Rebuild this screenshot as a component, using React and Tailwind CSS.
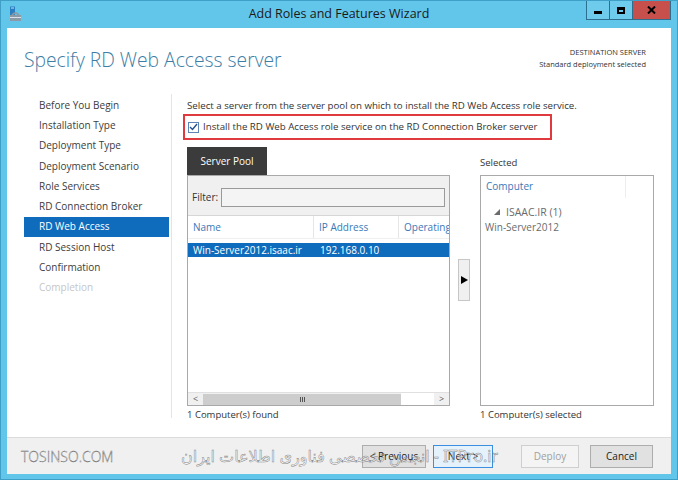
import React from "react";

const FONT = { fontFamily: '"Open Sans", "Noto Sans", sans-serif' };

const navItems = [
	"Before You Begin",
	"Installation Type",
	"Deployment Type",
	"Deployment Scenario",
	"Role Services",
	"RD Connection Broker",
	"RD Web Access",
	"RD Session Host",
	"Confirmation",
	"Completion",
];

function TitleBar() {
	return (
		<div className="relative h-[27px] flex items-center justify-center shrink-0">
			{/* app icon */}
			<svg className="absolute left-[8px] top-[5px]" width="14" height="16" viewBox="0 0 14 16">
				<rect x="1" y="0.5" width="5" height="9" fill="#2a7fc0" />
				<rect x="2" y="1.5" width="3" height="1" fill="#bfe4f7" />
				<path d="M1 9 h11 v6 h-11 z" fill="#8a9aa6" />
				<path d="M3 9 q3.5 -4 7 0" stroke="#8a9aa6" strokeWidth="1.5" fill="none" />
				<rect x="1" y="11" width="11" height="1" fill="#d8e2e8" />
			</svg>
			<span className="text-[12.5px] text-[#1a1a1a]" style={FONT}>
				Add Roles and Features Wizard
			</span>
			<div className="absolute right-[6px] top-0 flex h-[19px]">
				<div className="w-[24px] h-full border border-[#2d6f8e] border-t-0 bg-[#6fcbec] flex items-end justify-center pb-[5px]">
					<div className="w-[8px] h-[3px] bg-black" />
				</div>
				<div className="w-[23px] h-full border-b border-r border-[#2d6f8e] bg-[#6fcbec] flex items-center justify-center">
					<div className="w-[8px] h-[7px] border-2 border-black border-t-[3px]" />
				</div>
				<div className="w-[38px] h-full border-b border-r border-[#2d6f8e] bg-[#c7504c] flex items-center justify-center">
					<svg width="9" height="8" viewBox="0 0 9 8">
						<path d="M1 0.5 L8 7.5 M8 0.5 L1 7.5" stroke="#000" strokeWidth="2" />
					</svg>
				</div>
			</div>
		</div>
	);
}

function Nav() {
	return (
		<div className="w-[165px] shrink-0 pl-[17px] pt-[1px] mb-[19px] border-r border-[#e4e4e4]">
			{navItems.map((item) => (
				<div
					key={item}
					className={
						"h-[20.3px] pl-[15px] flex items-center text-[10px] " +
						(item === "RD Web Access"
							? "bg-[#0f6cbd] text-white mr-[2px]"
							: item === "Completion"
							? "text-[#c6c6c6]"
							: "text-[#3c3c3c]")
					}
				>
					{item}
				</div>
			))}
		</div>
	);
}

function ServerPool() {
	return (
		<div className="w-[263px] shrink-0 flex flex-col">
			<div className="w-[80px] h-[28px] bg-[#3b3b3b] text-white text-[10px] flex items-center justify-center">
				Server Pool
			</div>
			<div className="h-[231px] border border-[#a9a9a9] flex flex-col">
				<div className="h-[40px] bg-[#f0f0f0] border-b border-[#d6d6d6] flex items-center pl-[4px] pr-[4px] gap-[3px]">
					<span className="text-[10px] text-[#333] mt-[3px]">Filter:</span>
					<div className="flex-1 h-[19px] border border-[#9a9a9a] bg-[#f4f4f4] mt-[4px]" />
				</div>
				<div className="h-[23px] flex text-[10px] text-[#3a78b7] border-b border-[#f0f0f0]">
					<div className="w-[126px] pl-[5px] flex items-center border-r border-[#e6e6e6]">Name</div>
					<div className="w-[85px] pl-[5px] flex items-center border-r border-[#e6e6e6]">IP Address</div>
					<div className="flex-1 pl-[5px] flex items-center overflow-hidden whitespace-nowrap">Operating</div>
				</div>
				<div className="flex-1 pt-[4px]">
					<div className="h-[14px] bg-[#0f6cbd] text-white text-[10px] flex items-center">
						<div className="w-[127px] pl-[5px]">Win-Server2012.isaac.ir</div>
						<div className="pl-[5px]">192.168.0.10</div>
					</div>
				</div>
				<div className="h-[13px] flex items-center bg-[#f0f0f0] border-t border-[#e0e0e0]">
					<div className="w-[15px] h-full flex items-center justify-center text-[9px] text-[#606060]">&lt;</div>
					<div className="w-[198px] h-[11px] bg-[#cdcdcd] flex items-center justify-center">
						<div className="flex gap-[1px]">
							<div className="w-[1px] h-[5px] bg-[#555]" />
							<div className="w-[1px] h-[5px] bg-[#555]" />
							<div className="w-[1px] h-[5px] bg-[#555]" />
						</div>
					</div>
					<div className="flex-1 h-full bg-white" />
					<div className="w-[15px] h-full flex items-center justify-center text-[9px] text-[#606060]">&gt;</div>
				</div>
			</div>
			<div className="text-[9.5px] text-[#333] mt-[2px] leading-[14px]">1 Computer(s) found</div>
		</div>
	);
}

function SelectedPanel() {
	return (
		<div className="w-[174px] shrink-0 flex flex-col">
			<div className="h-[28px] flex items-end pb-[5px] text-[9.5px] text-[#333]">Selected</div>
			<div className="h-[231px] border border-[#a9a9a9] relative">
				<div className="absolute left-[144px] top-0 h-[22px] w-px bg-[#eeeeee]" />
				<div className="pl-[5px] pt-[3px] text-[10px] leading-[14px] text-[#3a78b7]">Computer</div>
				<div className="pl-[13px] pt-[12px] flex items-center gap-[6px] text-[10.5px] leading-[14px] text-[#6b6b6b]">
					<svg width="6" height="6" viewBox="0 0 6 6">
						<path d="M6 0 L6 6 L0 6 Z" fill="#6b6b6b" />
					</svg>
					ISAAC.IR (1)
				</div>
				<div className="pl-[4px] text-[10px] text-[#6b6b6b] leading-[16px]">Win-Server2012</div>
			</div>
			<div className="text-[9.5px] text-[#333] mt-[2px] leading-[14px]">1 Computer(s) selected</div>
		</div>
	);
}

function Footer() {
	return (
		<div className="relative h-[37px] mx-[6px] bg-[#f0f0f0] border-t border-[#dcdcdc] flex items-center shrink-0">
			<span
				className="ml-[14px] text-[14px] font-light text-white"
				style={{ ...FONT, WebkitTextStroke: "0.35px #555" }}
			>
				TOSINSO.COM
			</span>
			<div className="ml-auto mr-[18px] flex items-center gap-[7px] text-[10px]">
				<button className="w-[64px] h-[23px] border border-[#adadad] bg-[#e1e1e1] text-[#222]">
					&lt; Previous
				</button>
				<button className="w-[60px] h-[23px] border border-[#3c8ee0] bg-[#e5f1fb] text-[#222] mr-[21px]">
					Next &gt;
				</button>
				<button className="w-[58px] h-[23px] border border-[#cfcfcf] bg-[#f4f4f4] text-[#a0a0a0] mr-[4px]">
					Deploy
				</button>
				<button className="w-[63px] h-[23px] border border-[#adadad] bg-[#e1e1e1] text-[#222]">
					Cancel
				</button>
			</div>
			{/* watermark over the buttons */}
			<div
				dir="rtl"
				className="absolute left-[174px] top-[6px] text-[16px] text-[#ffffff]/50 whitespace-nowrap pointer-events-none"
				style={{ fontFamily: '"Noto Sans", "DejaVu Sans", sans-serif', WebkitTextStroke: "0.5px rgba(90,90,90,0.75)" }}
			>
				ITPro.ir - انجمن تخصصی فناوری اطلاعات ایران
			</div>
		</div>
	);
}

export default function App() {
	return (
		<div
			className="w-[678px] h-[480px] bg-[#62c6ea] border border-[#3f9fc7] flex flex-col overflow-hidden"
			style={FONT}
		>
			<TitleBar />
			<div className="flex-1 mx-[6px] bg-white flex flex-col min-h-0">
				<div className="h-[66px] shrink-0 flex justify-between pl-[17px] pr-[25px]">
					<h1 className="pt-[18px] text-[19.3px] font-light text-[#3d7ea6] leading-[28px]">
						Specify RD Web Access server
					</h1>
					<div className="pt-[18px] text-right text-[7.5px] leading-[12px] text-[#333]">
						<div>DESTINATION SERVER</div>
						<div>Standard deployment selected</div>
					</div>
				</div>
				<div className="flex-1 flex min-h-0">
					<Nav />
					<div className="flex-1 pl-[15px] pt-[5px]">
						<div className="text-[9.7px] text-[#333] leading-[14px] whitespace-nowrap">
							Select a server from the server pool on which to install the RD Web Access role service.
						</div>
						<div className="w-[369px] h-[26px] ml-[-4px] mt-[1px] border-2 border-[#e0393e] flex items-center pl-[3px] gap-[4px]">
							<div className="w-[11px] h-[11px] border border-[#5d84b4] bg-white flex items-center justify-center shrink-0">
								<svg width="9" height="8" viewBox="0 0 9 8">
									<path d="M1 4 L3.5 6.5 L8 1" stroke="#1f4f8c" strokeWidth="1.4" fill="none" />
								</svg>
							</div>
							<span className="text-[9.7px] text-[#333] whitespace-nowrap">
								Install the RD Web Access role service on the RD Connection Broker server
							</span>
						</div>
						<div className="flex mt-[7px]">
							<ServerPool />
							<div className="w-[30px] shrink-0 pt-[112px] pl-[8px]">
								<div className="w-[12px] h-[42px] border border-[#c6c6c6] bg-[#f0f0f0] flex items-center justify-center">
									<svg width="7" height="8" viewBox="0 0 7 8">
										<path d="M0 0 L7 4 L0 8 Z" fill="#000" />
									</svg>
								</div>
							</div>
							<SelectedPanel />
						</div>
					</div>
				</div>
			</div>
			<Footer />
			<div className="h-[5px] shrink-0" />
		</div>
	);
}
